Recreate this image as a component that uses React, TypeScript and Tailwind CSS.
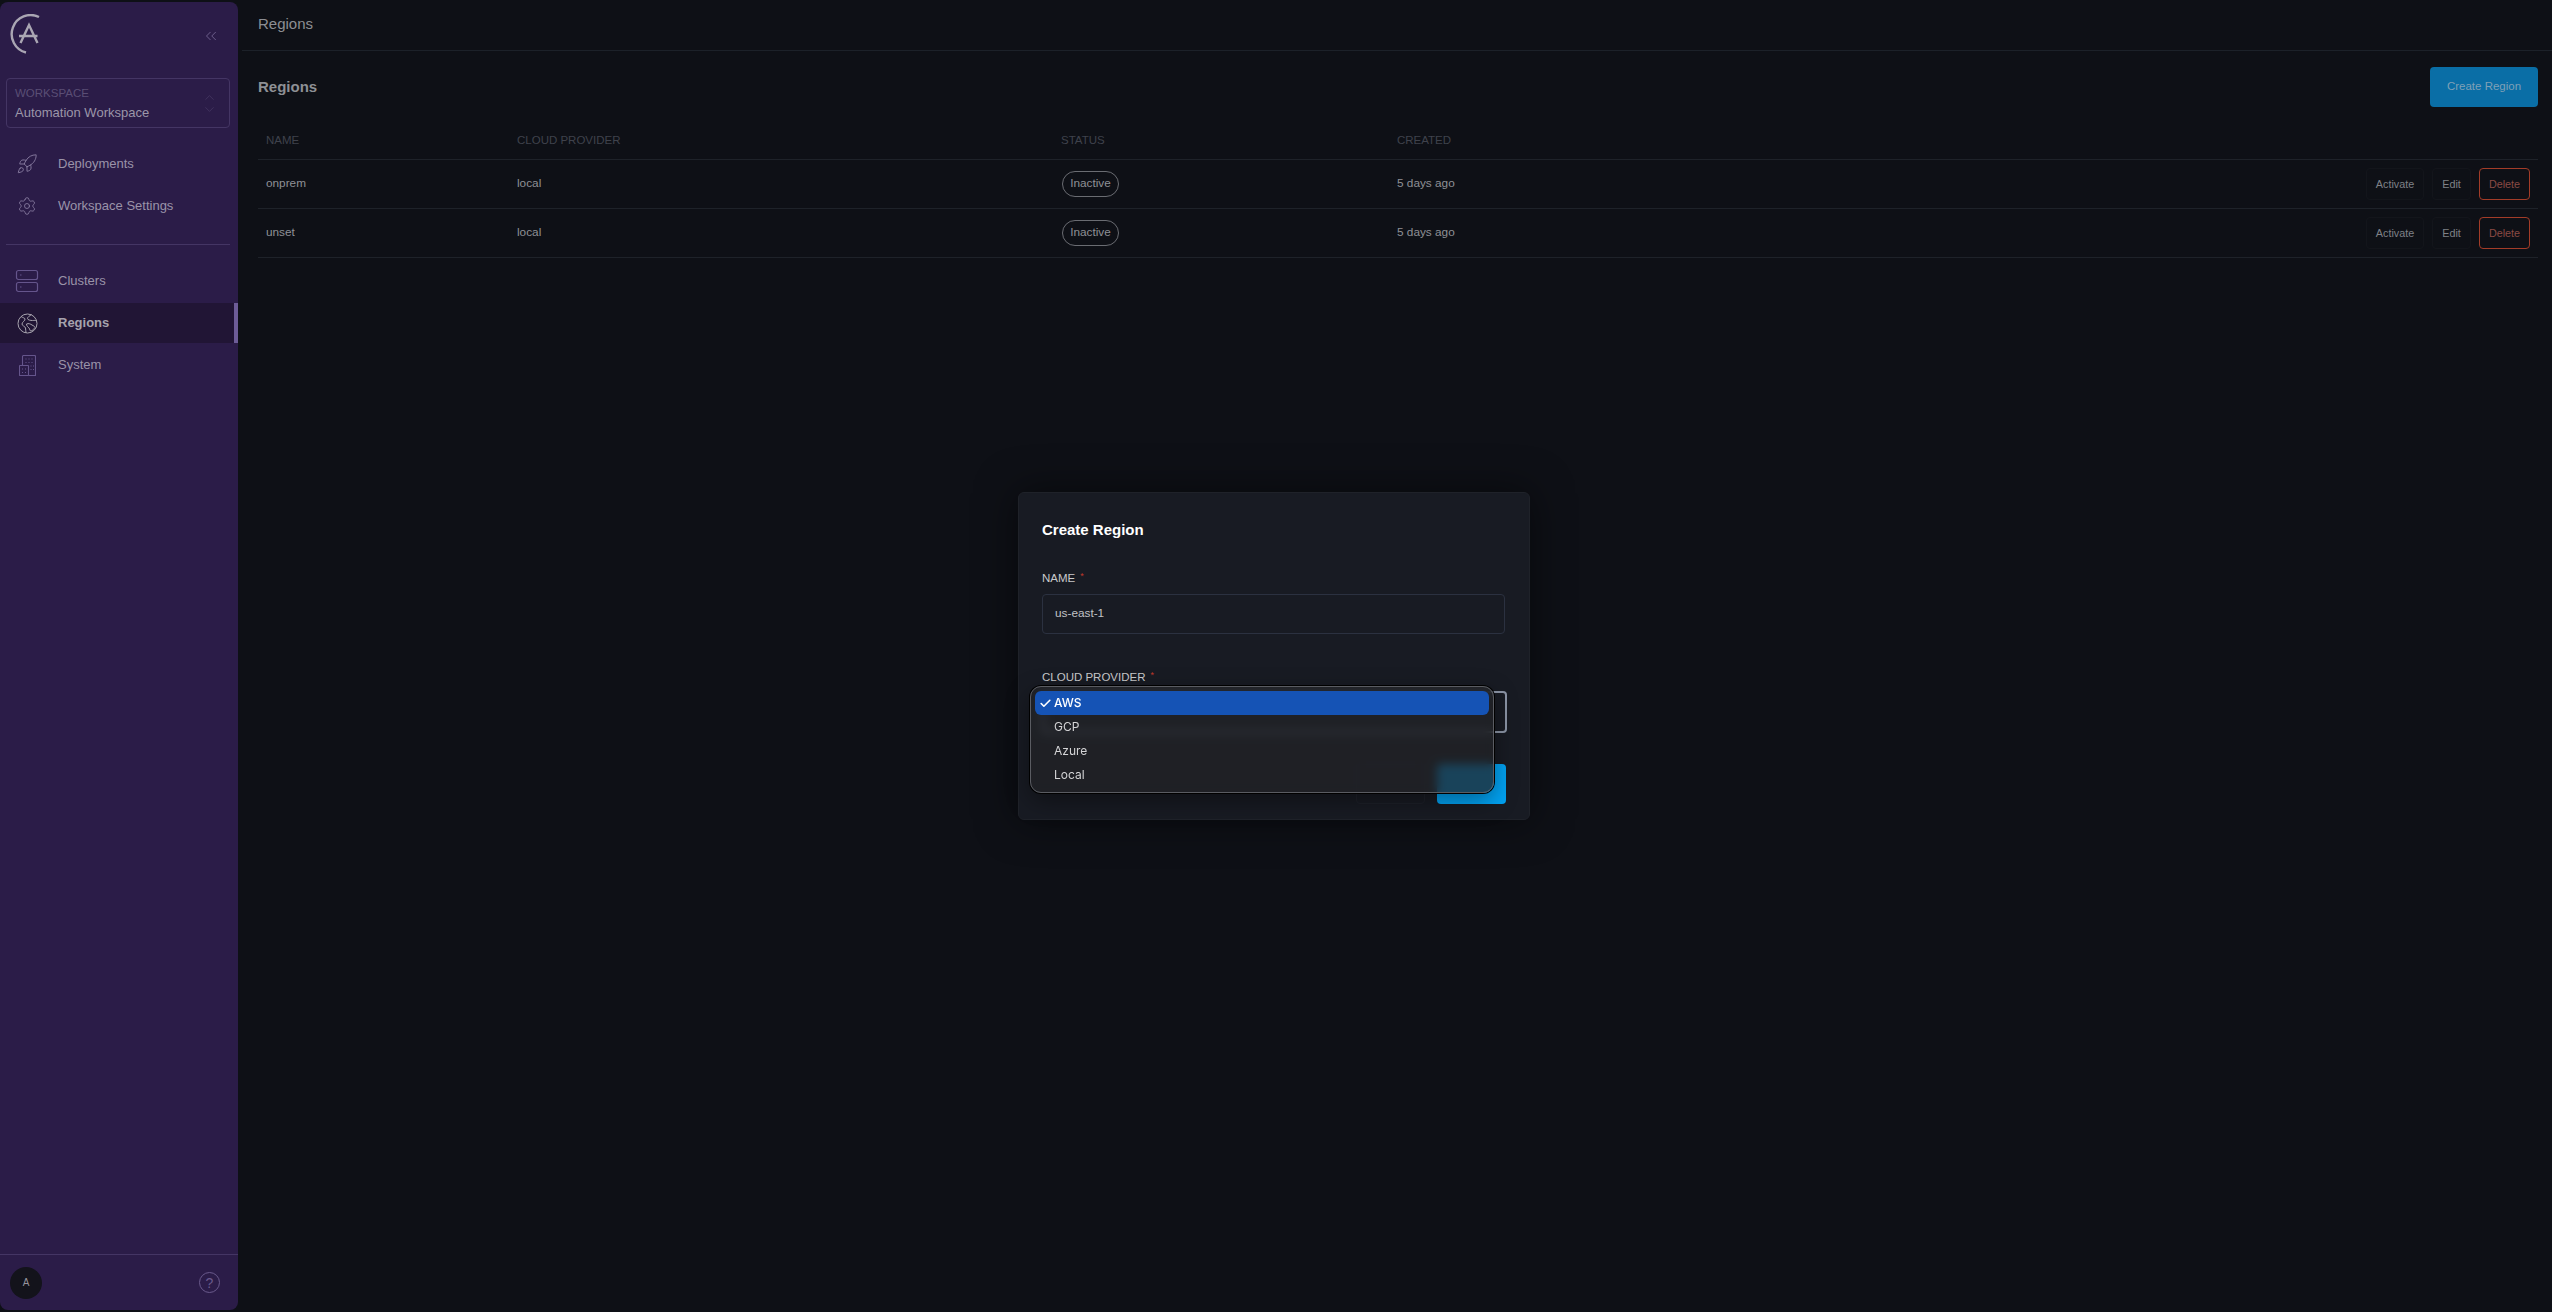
import { ChevronsLeft, Rocket, Settings, ChevronUp, ChevronDown, Check } from "lucide-react";

const sans = "font-['Liberation_Sans',Arial,sans-serif]";

function Logo() {
  return (
    <svg width="40" height="44" viewBox="0 0 40 44" fill="none" className="text-[#aaa6b3]">
      <path d="M32 3 A19 19 0 1 0 19 38.500" stroke="currentColor" strokeWidth="2.400" />
      <path d="M13.500 29 L22 11 L30.500 29 M12 22 H30.500" stroke="currentColor" strokeWidth="2.400" />
    </svg>
  );
}

function ClustersIcon() {
  return (
    <svg width="24" height="24" viewBox="0 0 24 24" fill="none" stroke="currentColor" strokeWidth="1.200">
      <rect x="1.500" y="1.500" width="21" height="9" rx="2" />
      <rect x="1.500" y="13.500" width="21" height="9" rx="2" />
      <path d="M5 6h1.500M5 18h1.500" />
    </svg>
  );
}

function EarthIcon() {
  return (
    <svg width="21" height="21" viewBox="0 0 21 21" fill="none" stroke="currentColor" strokeWidth="1">
      <circle cx="10.500" cy="10.500" r="9.500" />
      <path d="M4 3.500c2 1.500 3.500 1 4 2.500s-3 3-3 5 3 2 3.500 4 0 3 .5 5" />
      <path d="M14.500 1.500c-2 1.500-4 2.500-4 4s3 2 5 2 3-.5 4 .5" />
      <path d="M9.500 11c2-1 4 0 5.500 1s2.500 1 3 2.500c-1 1-2.500 3.500-4 3.500s-1-2-2-3-2.500-2-2.500-4z" />
    </svg>
  );
}

function BuildingIcon() {
  return (
    <svg width="17" height="21" viewBox="0 0 17 21" fill="none" stroke="currentColor" strokeWidth="1.100">
      <path d="M3.500 10V1.500a1 1 0 0 1 1-1h11a1 1 0 0 1 1 1v19h-7" />
      <rect x=".5" y="10.500" width="9" height="10" rx=".5" />
      <path d="M6.500 4h1M9.500 4h1M12.500 4h1M6.500 7.500h1M9.500 7.500h1M12.500 7.500h1M11.500 11h1M14 11h1M11.500 14.500h1M14 14.500h1M3 14h1M6 14h1M3 17.500h1M6 17.500h1" />
    </svg>
  );
}

function NavItem({ icon, label, active, bright }: { icon: React.ReactNode; label: string; active?: boolean; bright?: boolean }) {
  return (
    <div className={`relative flex h-10 items-center ${active ? "bg-[#211535]" : ""}`}>
      <div className={`flex w-[58px] shrink-0 items-center justify-center pr-1 ${active ? "text-[#a7a3ae]" : bright ? "text-[#8a7ea2]" : "text-[#65558c]"}`}>{icon}</div>
      <span className={`text-[13px] ${active ? "font-bold text-[#a6a2ad]" : "text-[#9a93a8]"}`}>{label}</span>
      {active && <div className="absolute inset-y-0 right-0 w-1 bg-[#6d5c97]" />}
    </div>
  );
}

function Row({ name }: { name: string }) {
  return (
    <div className="grid h-[49px] grid-cols-[251px_544px_336px_1fr_auto] items-center border-b border-[#1e2229] text-[11.800px] text-[#8e9096]">
      <div className="pl-2">{name}</div>
      <div className="pl-2">local</div>
      <div className="pl-[9px]">
        <span className="inline-flex h-[26px] w-[57px] items-center justify-center rounded-full border border-[#6a6c72] text-[#8e9096]">Inactive</span>
      </div>
      <div className="pl-2">5 days ago</div>
      <div className="flex items-center gap-2 pr-2 text-[10.800px]">
        <button className="h-8 w-[58px] rounded border border-[#13151b] text-[#7f8187]">Activate</button>
        <button className="h-8 w-[39px] rounded border border-[#13151b] text-[#7f8187]">Edit</button>
        <button className="h-8 w-[51px] rounded border border-[#a33c28] text-[#8a4a44]">Delete</button>
      </div>
    </div>
  );
}

export default function App() {
  return (
    <div className={`relative flex h-screen overflow-hidden bg-[#0e1016] ${sans}`}>
      <aside className="my-[2px] flex w-[238px] shrink-0 flex-col rounded-lg bg-[#2b1c48]">
        <div className="flex h-[76px] items-start justify-between pl-[7px] pr-[18px] pt-3">
          <Logo />
          <ChevronsLeft size={18} strokeWidth={1} className="mt-[13px] text-[#8273a0]" />
        </div>
        <div className="ml-[6px] mr-2 flex h-[50px] items-center justify-between rounded border border-[#443564] pl-2 pr-3">
          <div className="flex flex-col gap-[5px]">
            <span className="text-[11.500px] leading-[13px] text-[#5a4e75]">WORKSPACE</span>
            <span className="text-[13px] leading-[15px] text-[#9c96a8]">Automation Workspace</span>
          </div>
          <div className="flex flex-col text-[#4d3f6a]">
            <ChevronUp size={15} strokeWidth={1} className="-mb-[3px]" />
            <ChevronDown size={15} strokeWidth={1} />
          </div>
        </div>
        <nav className="mt-4 flex flex-col gap-[2px]">
          <NavItem icon={<Rocket size={22} strokeWidth={1} />} label="Deployments" bright />
          <NavItem icon={<Settings size={20} strokeWidth={1} />} label="Workspace Settings" bright />
        </nav>
        <div className="ml-[6px] mr-2 mt-[18px] border-t border-[#443564]" />
        <nav className="mt-4 flex flex-col gap-[2px]">
          <NavItem icon={<ClustersIcon />} label="Clusters" />
          <NavItem icon={<EarthIcon />} label="Regions" active />
          <NavItem icon={<BuildingIcon />} label="System" />
        </nav>
        <div className="mt-auto flex h-[56px] items-center justify-between border-t border-[#443564] pl-[10px] pr-[18px]">
          <div className="flex h-8 w-8 items-center justify-center rounded-full bg-[#13131b] text-[10px] text-[#96949c]">A</div>
          <div className="flex h-[21px] w-[21px] items-center justify-center rounded-full border border-[#6a5a8c] text-[14px] leading-none text-[#6a5a8c]">?</div>
        </div>
      </aside>

      <main className="flex min-w-0 flex-1 flex-col">
        <header className="ml-1 flex h-[51px] shrink-0 items-center border-b border-[#1c2129] pb-[2px] pl-4 text-[15px] text-[#8c8e93]">Regions</header>
        <div className="pl-5 pr-[14px]">
          <div className="flex h-[56px] items-center justify-between pt-[16px]">
            <h1 className="text-[15px] font-bold text-[#8e9095]">Regions</h1>
            <button className="h-10 w-[108px] rounded bg-[#0a6ea6] text-[11.500px] text-[#7fa0b6]">Create Region</button>
          </div>
          <div className="mt-4">
            <div className="grid h-[37px] grid-cols-[251px_544px_336px_1fr] items-center border-b border-[#1e2229] text-[11.500px] text-[#3f424c]">
              <div className="pl-2">NAME</div>
              <div className="pl-2">CLOUD PROVIDER</div>
              <div className="pl-2">STATUS</div>
              <div className="pl-2">CREATED</div>
            </div>
            <Row name="onprem" />
            <Row name="unset" />
          </div>
        </div>
      </main>

      <div className="absolute inset-0 flex items-center justify-center pr-1">
        <div className="relative flex h-[328px] w-[512px] flex-col rounded-md border border-[#1f2229] bg-[#181b23] px-[23px] shadow-[0_0_40px_rgba(0,0,0,0.5)]">
          <h2 className="mt-[28px] text-[15px] font-bold leading-[17px] text-white">Create Region</h2>
          <label className="mt-[33px] flex text-[11.500px] leading-[14px] text-[#c8c9cc]">
            NAME<span className="ml-[5px] mt-[-2px] text-[9px] text-[#c0392b]">*</span>
          </label>
          <div className="mt-[9px] flex h-10 w-[463px] items-center rounded border border-[#2b3140] pl-3 text-[11.800px] text-[#c0c2c6]">us-east-1</div>
          <label className="mt-9 flex text-[11.500px] leading-[14px] text-[#c8c9cc]">
            CLOUD PROVIDER<span className="ml-[5px] mt-[-2px] text-[9px] text-[#c0392b]">*</span>
          </label>
          <div className="mt-[7px] h-[42px] w-[465px] rounded border-2 border-[#8b94a5]" />
          <div className="mt-[31px] flex w-[464px] justify-end gap-3">
            <div className="h-10 w-[69px] rounded border border-[#1e212a]" />
            <div className="h-10 w-[69px] rounded bg-[#02a3f3]" />
          </div>

          <div className="absolute left-[11px] top-[193px] h-[107px] w-[464px] rounded-[11px] border border-[#5a5c62] bg-[#222327]/75 p-[4px] shadow-[0_0_0_1px_#000,0_8px_24px_rgba(0,0,0,0.4)] backdrop-blur-[5px]">
            <div className="flex h-6 items-center rounded-md bg-[#1553b5] text-[12px] font-medium text-white font-['Inter',sans-serif]">
              <Check size={13} strokeWidth={3} className="ml-[4px] mr-[2px]" />
              <span>AWS</span>
            </div>
            <div className="flex h-6 items-center pl-[19px] text-[12px] text-[#d4d4d6] font-['Inter',sans-serif]">GCP</div>
            <div className="flex h-6 items-center pl-[19px] text-[12px] text-[#d4d4d6] font-['Inter',sans-serif]">Azure</div>
            <div className="flex h-6 items-center pl-[19px] text-[12px] text-[#d4d4d6] font-['Inter',sans-serif]">Local</div>
          </div>
        </div>
      </div>
    </div>
  );
}
